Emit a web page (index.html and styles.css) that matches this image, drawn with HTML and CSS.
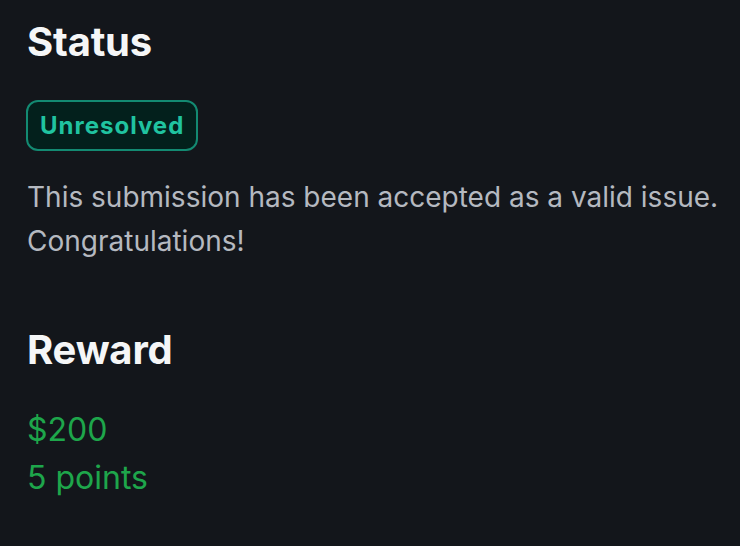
FILE: index.html
```html
<!DOCTYPE html>
<html>
<head>
<meta charset="utf-8">
<link rel="stylesheet" href="styles.css">
</head>
<body>
<main class="panel">
  <section class="section">
    <h2 class="title">Status</h2>
    <span class="badge">Unresolved</span>
    <p class="desc">This submission has been accepted as a valid issue. Congratulations!</p>
  </section>
  <section class="section reward">
    <h2 class="title">Reward</h2>
    <div class="amounts">
      <div class="amount">$200</div>
      <div class="amount">5 points</div>
    </div>
  </section>
</main>
</body>
</html>
```
FILE: styles.css
```css
html, body {
  margin: 0;
  padding: 0;
  background: #13161b;
  height: 100%;
}
body {
  font-family: Inter, "Noto Sans", sans-serif;
  overflow: hidden;
}
.panel {
  padding: 18px 10px 0 27px;
}
.section {
  display: flex;
  flex-direction: column;
  align-items: flex-start;
}
.title {
  margin: 0;
  font-size: 40px;
  font-weight: 700;
  line-height: 48px;
  color: #f5f6f7;
  letter-spacing: -0.2px;
}
.badge {
  margin-top: 34px;
  margin-left: -1px;
  box-sizing: border-box;
  height: 51px;
  padding: 0 12px;
  display: flex;
  align-items: center;
  border: 2px solid #138a72;
  border-radius: 12px;
  background: #03201c;
  color: #20c3a0;
  font-size: 24px;
  font-weight: 700;
  letter-spacing: 1px;
}
.desc {
  margin: 24px 0 0;
  font-size: 28px;
  line-height: 44px;
  color: #b5b9c0;
}
.reward {
  margin-top: 63px;
}
.amounts {
  margin-top: 32px;
  color: #1ea64b;
  font-size: 32px;
  line-height: 48px;
}
```
